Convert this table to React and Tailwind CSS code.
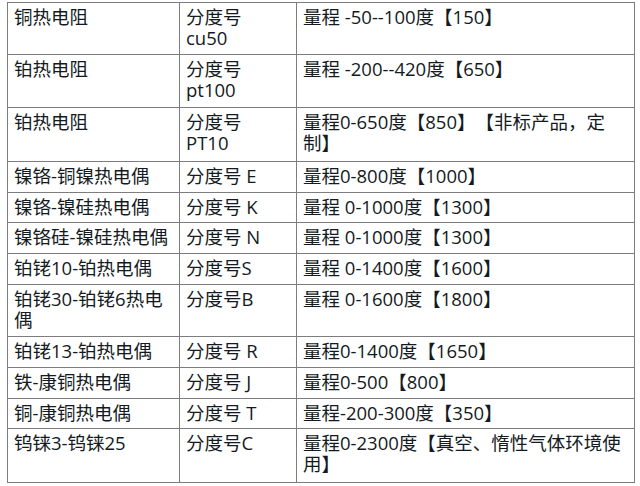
const rows = [
  [['铜热电阻'], ['分度号', 'cu50'], ['量程 -50--100度【150】']],
  [['铂热电阻'], ['分度号', 'pt100'], ['量程 -200--420度【650】']],
  [['铂热电阻'], ['分度号', 'PT10'], ['量程0-650度【850】【非标产品，定', '制】']],
  [['镍铬-铜镍热电偶'], ['分度号 E'], ['量程0-800度【1000】']],
  [['镍铬-镍硅热电偶'], ['分度号 K'], ['量程 0-1000度【1300】']],
  [['镍铬硅-镍硅热电偶'], ['分度号 N'], ['量程 0-1000度【1300】']],
  [['铂铑10-铂热电偶'], ['分度号S'], ['量程 0-1400度【1600】']],
  [['铂铑30-铂铑6热电', '偶'], ['分度号B'], ['量程 0-1600度【1800】']],
  [['铂铑13-铂热电偶'], ['分度号 R'], ['量程0-1400度【1650】']],
  [['铁-康铜热电偶'], ['分度号 J'], ['量程0-500【800】']],
  [['铜-康铜热电偶'], ['分度号 T'], ['量程-200-300度【350】']],
  [['钨铼3-钨铼25'], ['分度号C'], ['量程0-2300度【真空、惰性气体环境使', '用】']],
];

const Cell = ({ lines }) => (
  <div className="border-r border-b border-[#7d7d7d] px-1.5 pt-[3px] whitespace-nowrap">
    {lines.map((l, i) => (
      <div key={i}>{l}</div>
    ))}
  </div>
);

export default function App() {
  return (
    <div
      className="w-[640px] h-[486px] bg-white pt-[2px] pl-[7px] text-[18.5px] leading-[21px] text-[#141a22] [text-spacing-trim:space-all]"
      style={{ fontFamily: '"Open Sans", "Noto Sans CJK SC", sans-serif' }}
    >
      <div className="grid grid-cols-[172px_117px_338px] grid-rows-[52px_53px_54px_31px_30px_31px_31px_52px_31px_31px_30px_54px] w-[628px] border-l border-t border-[#7d7d7d]">
        {rows.map((r, i) => (
          <div key={i} className="contents">
            <Cell lines={r[0]} />
            <Cell lines={r[1]} />
            <Cell lines={r[2]} />
          </div>
        ))}
      </div>
    </div>
  );
}
